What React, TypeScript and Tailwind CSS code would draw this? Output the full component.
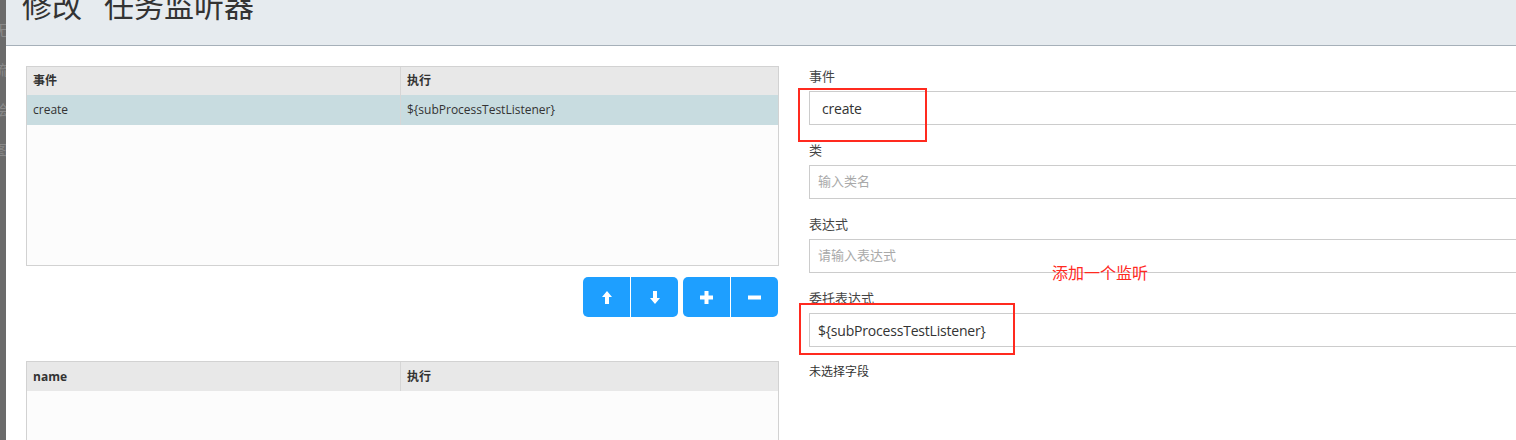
const font = "font-['Open_Sans','Noto_Sans_CJK_SC',sans-serif]";

function Field({ label, value, placeholder, indent }: { label: string; value?: string; placeholder?: string; indent?: boolean }) {
    return (
        <div className="mb-[15px]">
            <div className="h-[20px] leading-[20px] text-[13px] text-[#444] mb-[5px]">{label}</div>
            <div className="h-[34px] w-[760px] border border-[#cccccc] bg-white flex items-center px-[8px] text-[14px]">
                {value ? (
                    <span className={`text-[#333] tracking-[-0.2px] ${indent ? "pl-[4px]" : ""}`}>{value}</span>
                ) : (
                    <span className="text-[#a9a9a9] text-[13px]">{placeholder}</span>
                )}
            </div>
        </div>
    );
}

function Arrow({ down }: { down?: boolean }) {
    return (
        <svg width="10" height="13" viewBox="0 0 10 13" className={down ? "rotate-180" : ""}>
            <path d="M5 0 L10 6 H7 V13 H3 V6 H0 Z" fill="white" />
        </svg>
    );
}

function Sign({ plus }: { plus?: boolean }) {
    return (
        <svg width="13" height="13" viewBox="0 0 13 13">
            <rect x="0" y="4.5" width="13" height="4" fill="white" />
            {plus && <rect x="4.5" y="0" width="4" height="13" fill="white" />}
        </svg>
    );
}

export default function App() {
    return (
        <div className={`relative flex h-[440px] w-[1516px] overflow-hidden bg-white ${font}`}>
            {/* backdrop strip */}
            <div className="w-[6px] shrink-0 bg-[#6b6b6b] overflow-hidden text-[#8a8a8a] text-[14px] leading-[40px] pt-[10px]">
                <div className="-ml-[6px]">无</div>
                <div className="-ml-[6px]">流</div>
                <div className="-ml-[6px]">绘</div>
                <div className="-ml-[6px]">图</div>
            </div>

            <div className="flex-1 flex flex-col">
                {/* header */}
                <div className="h-[46px] shrink-0 bg-[#e6ebef] border-b border-[#a6b0b9] overflow-hidden">
                    <div className="pl-[16px] -mt-[11px] text-[30px] leading-[30px] text-[#333] font-['Noto_Sans_CJK_SC',sans-serif]">
                        修改<span className="ml-[22px]">任务监听器</span>
                    </div>
                </div>

                <div className="flex pl-[20px] pt-[20px]">
                    {/* left */}
                    <div className="w-[753px] shrink-0">
                        <div className="h-[200px] border border-[#d2d2d2] bg-[#fcfcfc] text-[12px] text-[#333]">
                            <div className="flex h-[28px] bg-[#e8e8e8] font-bold">
                                <div className="w-[374px] border-r border-[#d6d6d6] pl-[6px] flex items-center">事件</div>
                                <div className="flex-1 pl-[6px] flex items-center">执行</div>
                            </div>
                            <div className="flex h-[30px] bg-[#c8dce0]">
                                <div className="w-[374px] border-r border-[#d6d6d6] pl-[6px] flex items-center">create</div>
                                <div className="flex-1 pl-[6px] flex items-center">{"${subProcessTestListener}"}</div>
                            </div>
                        </div>

                        <div className="flex justify-end gap-[5px] mt-[11px] pr-px">
                            <div className="flex rounded-[5px] overflow-hidden">
                                <button className="w-[48px] h-[40px] bg-[#1e9fff] flex items-center justify-center border-r border-white">
                                    <Arrow />
                                </button>
                                <button className="w-[47px] h-[40px] bg-[#1e9fff] flex items-center justify-center">
                                    <Arrow down />
                                </button>
                            </div>
                            <div className="flex rounded-[5px] overflow-hidden">
                                <button className="w-[48px] h-[40px] bg-[#1e9fff] flex items-center justify-center border-r border-white">
                                    <Sign plus />
                                </button>
                                <button className="w-[47px] h-[40px] bg-[#1e9fff] flex items-center justify-center">
                                    <Sign />
                                </button>
                            </div>
                        </div>

                        <div className="mt-[44px] h-[200px] border border-[#d2d2d2] bg-[#fcfcfc] text-[12px] text-[#333]">
                            <div className="flex h-[29px] bg-[#e8e8e8] font-bold">
                                <div className="w-[374px] border-r border-[#d6d6d6] pl-[6px] flex items-center">name</div>
                                <div className="flex-1 pl-[6px] flex items-center">执行</div>
                            </div>
                        </div>
                    </div>

                    {/* right */}
                    <div className="ml-[30px] flex-1">
                        <Field label="事件" value="create" indent />
                        <Field label="类" placeholder="输入类名" />
                        <Field label="表达式" placeholder="请输入表达式" />
                        <Field label="委托表达式" value="${subProcessTestListener}" />
                        <div className="text-[12px] text-[#333] leading-[20px]">未选择字段</div>
                    </div>
                </div>
            </div>

            {/* annotations */}
            <div className="absolute left-[798px] top-[88px] w-[129px] h-[54px] border-2 border-[#ff2a1f]" />
            <div className="absolute left-[799px] top-[303px] w-[216px] h-[52px] border-2 border-[#ff2a1f]" />
            <div className="absolute left-[1052px] top-[261px] text-[16px] leading-[22px] text-[#ff2a1f] font-['Noto_Sans_CJK_SC',sans-serif]">添加一个监听</div>
        </div>
    );
}
